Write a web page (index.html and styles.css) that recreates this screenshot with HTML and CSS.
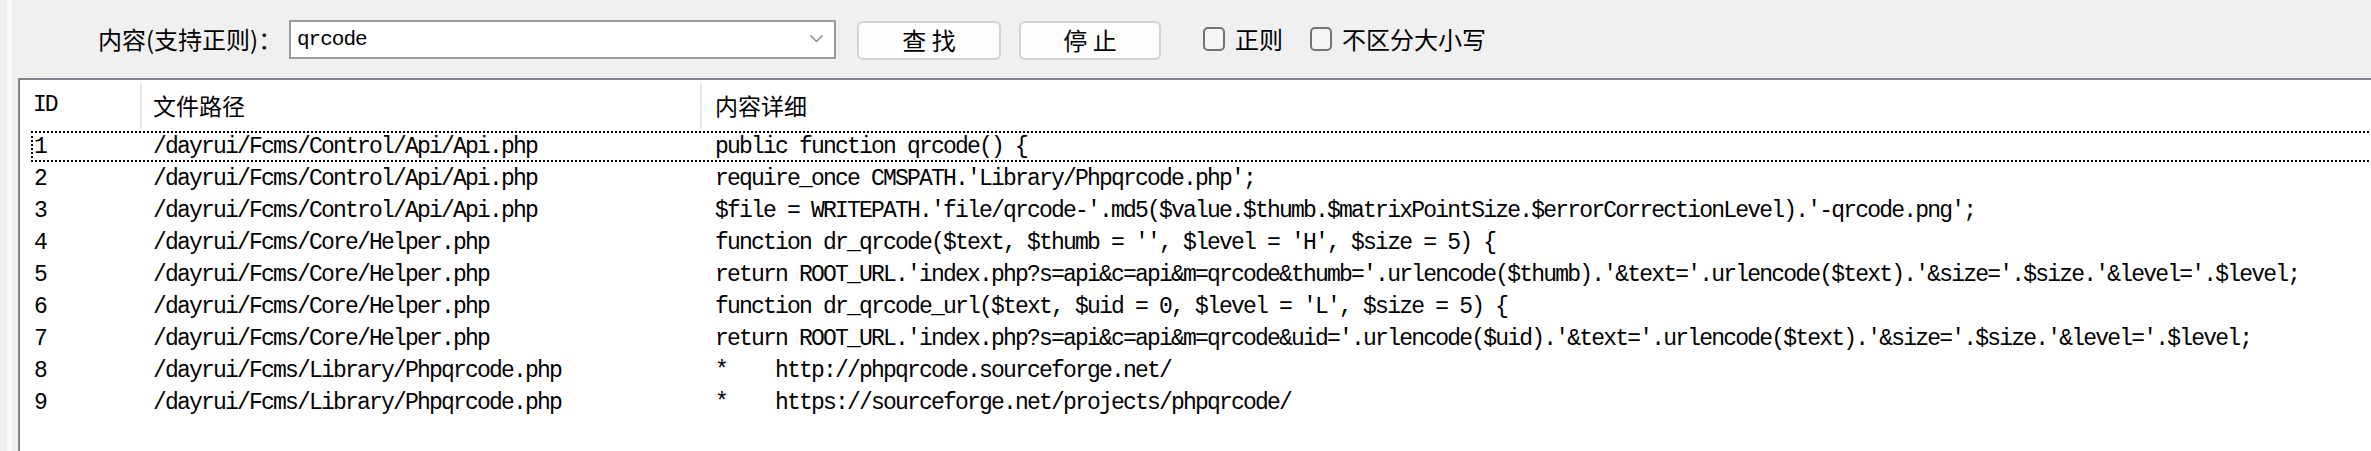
FILE: index.html
```html
<!DOCTYPE html>
<html lang="zh-CN">
<head>
<meta charset="utf-8">
<title>查找</title>
<link rel="stylesheet" href="styles.css">
</head>
<body>
<div class="app">
  <div class="edge"></div>
  <div class="main">
    <div class="toolbar">
      <span class="label">内容(支持正则)：</span>
      <div class="combo">
        <span class="combo-text">qrcode</span>
        <svg class="chev" width="13" height="8" viewBox="0 0 13 8"><polyline points="0.5,0.5 6.5,6.5 12.5,0.5" fill="none" stroke="#7a7a7a" stroke-width="1.2"/></svg>
      </div>
      <button class="btn btn-find">查 找</button>
      <button class="btn btn-stop">停 止</button>
      <label class="check"><span class="box"></span><span class="check-text">正则</span></label>
      <label class="check check-2"><span class="box"></span><span class="check-text">不区分大小写</span></label>
    </div>
    <div class="list">
      <div class="head">
        <div class="hc hc-id">ID</div>
        <div class="hc hc-path">文件路径</div>
        <div class="hc hc-content">内容详细</div>
      </div>
      <div class="rows">
        <div class="row focused"><span class="c-id">1</span><span class="c-path">/dayrui/Fcms/Control/Api/Api.php</span><span class="c-content">public function qrcode() {</span></div>
        <div class="row"><span class="c-id">2</span><span class="c-path">/dayrui/Fcms/Control/Api/Api.php</span><span class="c-content">require_once CMSPATH.'Library/Phpqrcode.php';</span></div>
        <div class="row"><span class="c-id">3</span><span class="c-path">/dayrui/Fcms/Control/Api/Api.php</span><span class="c-content">$file = WRITEPATH.'file/qrcode-'.md5($value.$thumb.$matrixPointSize.$errorCorrectionLevel).'-qrcode.png';</span></div>
        <div class="row"><span class="c-id">4</span><span class="c-path">/dayrui/Fcms/Core/Helper.php</span><span class="c-content">function dr_qrcode($text, $thumb = '', $level = 'H', $size = 5) {</span></div>
        <div class="row"><span class="c-id">5</span><span class="c-path">/dayrui/Fcms/Core/Helper.php</span><span class="c-content">return ROOT_URL.'index.php?s=api&amp;c=api&amp;m=qrcode&amp;thumb='.urlencode($thumb).'&amp;text='.urlencode($text).'&amp;size='.$size.'&amp;level='.$level;</span></div>
        <div class="row"><span class="c-id">6</span><span class="c-path">/dayrui/Fcms/Core/Helper.php</span><span class="c-content">function dr_qrcode_url($text, $uid = 0, $level = 'L', $size = 5) {</span></div>
        <div class="row"><span class="c-id">7</span><span class="c-path">/dayrui/Fcms/Core/Helper.php</span><span class="c-content">return ROOT_URL.'index.php?s=api&amp;c=api&amp;m=qrcode&amp;uid='.urlencode($uid).'&amp;text='.urlencode($text).'&amp;size='.$size.'&amp;level='.$level;</span></div>
        <div class="row"><span class="c-id">8</span><span class="c-path">/dayrui/Fcms/Library/Phpqrcode.php</span><span class="c-content">*&nbsp;&nbsp;&nbsp;&nbsp;http://phpqrcode.sourceforge.net/</span></div>
        <div class="row"><span class="c-id">9</span><span class="c-path">/dayrui/Fcms/Library/Phpqrcode.php</span><span class="c-content">*&nbsp;&nbsp;&nbsp;&nbsp;https://sourceforge.net/projects/phpqrcode/</span></div>
      </div>
    </div>
  </div>
</div>
</body>
</html>
```

FILE: styles.css
```css
html, body {
  margin: 0;
  padding: 0;
}

body {
  background: #f0f0f0;
  width: 2371px;
  height: 451px;
  overflow: hidden;
  color: #000;
  font-family: "Noto Sans CJK SC", "Noto Sans", sans-serif;
}

.app {
  display: flex;
  height: 451px;
  padding-left: 7px;
  box-sizing: border-box;
}

.edge {
  width: 5px;
  flex: none;
  background: #f9f9f9;
}

.main {
  flex: 1;
  min-width: 0;
  display: flex;
  flex-direction: column;
  padding-left: 6px;
}

/* ---------- toolbar ---------- */
.toolbar {
  flex: none;
  height: 78px;
  display: flex;
  align-items: center;
  padding-left: 80px;
  box-sizing: border-box;
}

.label {
  font-size: 24px;
  line-height: 1;
  width: 185px;
  margin-right: 6px;
  white-space: nowrap;
  letter-spacing: 0;
}

.combo {
  width: 547px;
  height: 39px;
  box-sizing: border-box;
  border: 2px solid #9b9b9b;
  background: #fff;
  display: flex;
  align-items: center;
  justify-content: space-between;
  padding: 0 11px 0 6px;
}

.combo-text {
  font-family: "Liberation Mono", monospace;
  font-size: 21px;
  letter-spacing: -1px;
  line-height: 1;
}

.chev {
  display: block;
}

.btn {
  height: 39px;
  box-sizing: border-box;
  border: 2px solid #d3d3d3;
  border-radius: 6px;
  background: #fdfdfd;
  font-family: "Noto Sans CJK SC", sans-serif;
  font-size: 24px;
  line-height: 1;
  color: #000;
  padding: 0;
  margin: 2px 0 0 0;
}

.btn-find {
  width: 144px;
  margin-left: 21px;
}

.btn-stop {
  width: 142px;
  margin-left: 18px;
}

.check {
  display: flex;
  align-items: center;
  margin-left: 42px;
}

.check-2 {
  margin-left: 27px;
}

.box {
  width: 22px;
  height: 24px;
  box-sizing: border-box;
  border: 2px solid #727272;
  border-radius: 5px;
  background: #f6f6f6;
  margin-right: 10px;
}

.check-text {
  font-size: 24px;
  line-height: 1;
}

/* ---------- list ---------- */
.list {
  flex: 1;
  background: #fff;
  border-top: 2px solid #83868d;
  border-left: 2px solid #83868d;
  overflow: hidden;
}

.head {
  display: grid;
  grid-template-columns: 122px 560px 1fr;
  height: 51px;
  align-items: center;
}

.hc {
  height: 46px;
  display: flex;
  align-items: center;
  box-sizing: border-box;
  font-size: 23px;
  line-height: 1;
}

.hc-id {
  padding-left: 13px;
  border-right: 2px solid #e6e6e6;
  font-family: "Liberation Mono", monospace;
  font-size: 23px;
  letter-spacing: -2px;
}

.hc-path {
  padding-left: 11px;
  border-right: 2px solid #e6e6e6;
}

.hc-content {
  padding-left: 13px;
}

.row {
  position: relative;
  display: grid;
  grid-template-columns: 122px 560px 1fr;
  height: 32px;
  align-items: center;
  font-family: "Liberation Mono", monospace;
  font-size: 23px;
  letter-spacing: -1.8px;
  white-space: pre;
  line-height: 1;
}

.row.focused::after {
  content: "";
  position: absolute;
  top: 0;
  bottom: 1px;
  left: 11px;
  right: -6px;
  border: 2px dotted #000;
  pointer-events: none;
}

.c-id {
  padding-left: 14px;
}

.c-path {
  padding-left: 11px;
}

.c-content {
  padding-left: 13px;
}
```
